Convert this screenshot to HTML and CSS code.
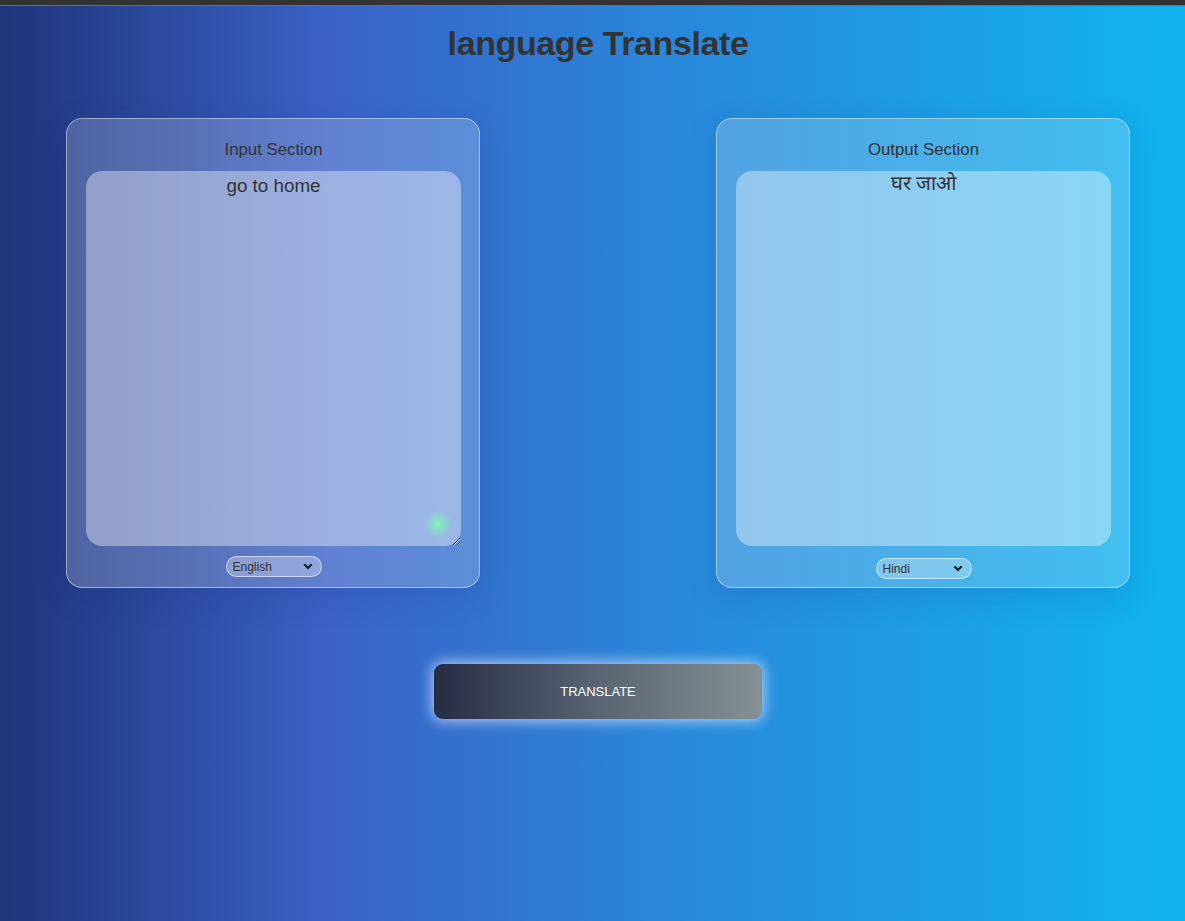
FILE: index.html
```html
<!DOCTYPE html>
<html lang="en">
<head>
<meta charset="utf-8">
<title>language Translate</title>
<link rel="stylesheet" href="styles.css">
</head>
<body>
<div class="topbar"></div>
<main class="page">
  <h1 class="title">language Translate</h1>
  <div class="sections">
    <section class="card">
      <h3 class="card-title">Input Section</h3>
      <div class="field">
        <textarea class="text-box">go to home</textarea>
        <span class="glow"></span>
      </div>
      <div class="select-wrap">
        <select class="lang-select">
          <option>English</option>
          <option>Hindi</option>
        </select>
        <svg class="chev" width="10" height="7" viewBox="0 0 10 7"><path d="M1.3 1.3 L5 5 L8.7 1.3" fill="none" stroke="#1e1e1e" stroke-width="2.2"/></svg>
      </div>
    </section>
    <section class="card card-output">
      <h3 class="card-title">Output Section</h3>
      <div class="field">
        <div class="text-box output-text">घर जाओ</div>
      </div>
      <div class="select-wrap select-output">
        <select class="lang-select">
          <option>Hindi</option>
          <option>English</option>
        </select>
        <svg class="chev" width="10" height="7" viewBox="0 0 10 7"><path d="M1.3 1.3 L5 5 L8.7 1.3" fill="none" stroke="#1e1e1e" stroke-width="2.2"/></svg>
      </div>
    </section>
  </div>
  <div class="actions">
    <button class="translate-btn">TRANSLATE</button>
  </div>
</main>
</body>
</html>
```

FILE: styles.css
```css
* { box-sizing: border-box; }
html, body { margin: 0; padding: 0; }
body {
  min-height: 921px;
  background: linear-gradient(90deg, #1f347a 0%, #3a62c7 28%, #2a85d9 55%, #10b4f0 100%);
  font-family: "Liberation Sans", Arial, sans-serif;
  color: #333;
}
.topbar {
  height: 6px;
  background: #333;
  border-bottom: 1px solid #6d6f75;
}
.page {
  display: flex;
  flex-direction: column;
}
.title {
  margin: 17px 0 0;
  text-align: center;
  font-size: 34px;
  line-height: 41px;
  letter-spacing: -0.4px;
  font-weight: bold;
  color: #333;
  padding-left: 11px;
}
.sections {
  margin-top: 54px;
  padding-left: 66px;
  padding-right: 55px;
  display: flex;
  justify-content: space-between;
}
.card {
  width: 414px;
  height: 470px;
  padding: 21px 18px 0 19px;
  border: 1px solid rgba(255,255,255,0.45);
  border-radius: 16px;
  background: rgba(255,255,255,0.2);
  box-shadow: 0 8px 32px rgba(20, 40, 120, 0.15);
  display: flex;
  flex-direction: column;
  align-items: center;
}
.card-title {
  margin: 0 0 11px;
  font-size: 16.8px;
  line-height: 20px;
  font-weight: normal;
  color: #333;
}
.field {
  position: relative;
  width: 375px;
  height: 375px;
}
.text-box {
  display: block;
  width: 375px;
  height: 375px;
  margin: 0;
  padding: 4px 10px;
  border: none;
  outline: none;
  border-radius: 16px;
  background: rgba(255,255,255,0.38);
  font-family: "Liberation Sans", Arial, sans-serif;
  font-size: 18.8px;
  color: #333;
  text-align: center;
  resize: both;
}
.output-text {
  padding-top: 0;
  font-size: 20px;
  line-height: 24px;
}
.glow {
  position: absolute;
  left: 339px;
  top: 340px;
  width: 26px;
  height: 26px;
  border-radius: 50%;
  background: radial-gradient(circle, rgba(130,245,190,0.95) 0%, rgba(130,235,190,0.5) 45%, rgba(130,230,200,0) 75%);
  pointer-events: none;
}
.select-wrap {
  position: relative;
  margin-top: 10px;
  width: 96px;
  height: 21px;
}
.select-output { margin-top: 12px; }
.lang-select {
  appearance: none;
  -webkit-appearance: none;
  width: 96px;
  height: 21px;
  padding: 0 6px;
  border: 1px solid rgba(255,255,255,0.55);
  border-radius: 11px;
  background: rgba(255,255,255,0.3);
  font-family: "Liberation Sans", Arial, sans-serif;
  font-size: 12px;
  color: #333;
  outline: none;
}
.chev {
  position: absolute;
  right: 9px;
  top: 7px;
  pointer-events: none;
}
.actions {
  margin-top: 76px;
  display: flex;
  justify-content: center;
  padding-left: 11px;
}
.translate-btn {
  width: 328px;
  height: 55px;
  border: none;
  border-radius: 9px;
  background: linear-gradient(90deg, #262c45 0%, #5a6472 50%, #859194 100%);
  color: #fff;
  font-family: "Liberation Sans", Arial, sans-serif;
  font-size: 13px;
  box-shadow: 0 0 14px 2px rgba(220,235,255,0.75);
}
```
